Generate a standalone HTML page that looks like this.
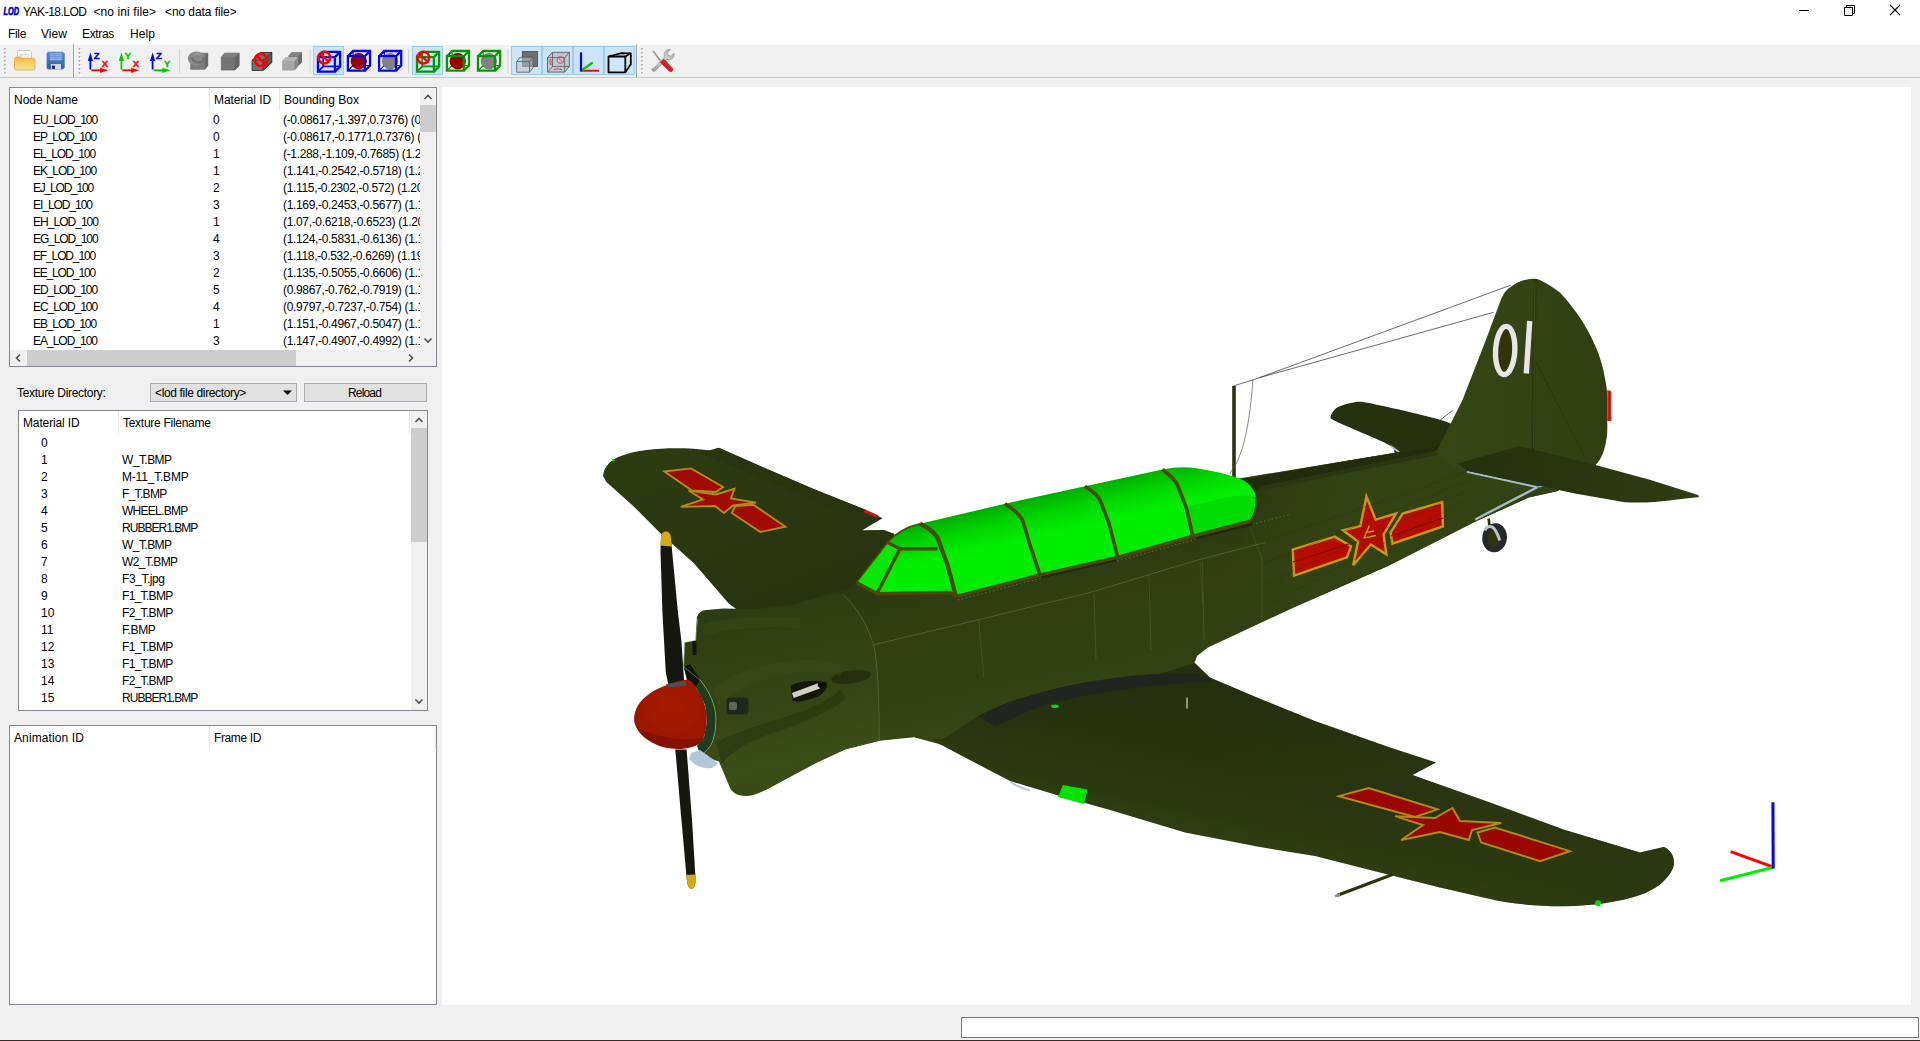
<!DOCTYPE html>
<html><head><meta charset="utf-8"><title>YAK-18.LOD</title>
<style>
*{box-sizing:border-box;margin:0;padding:0}
html,body{width:1920px;height:1041px;overflow:hidden;background:#f0f0f0;font-family:"Liberation Sans",sans-serif;font-size:12px;color:#000}
.abs{position:absolute}
.tx{position:absolute;height:17px;line-height:17px;white-space:pre}
#title{left:0;top:0;width:1920px;height:44px;background:#fff}
#tb{left:0;top:44px;width:1920px;height:34px;background:#f0f0f0;border-top:1px solid #fff;border-bottom:1px solid #c9c9c9}
#vp{left:442px;top:87px;width:1469px;height:918px;background:#fff;overflow:hidden}
</style></head><body>
<div id="title" class="abs"></div>
<div id="tb" class="abs"></div>
<div class="abs" style="left:9px;top:87px;width:428px;height:280px;background:#fff;border:1px solid #828790"></div>
<div class="abs" style="left:209px;top:88px;width:1px;height:22px;background:#e5e5e5;"></div>
<div class="abs" style="left:279px;top:88px;width:1px;height:22px;background:#e5e5e5;"></div>
<div class="abs" style="left:420px;top:88px;width:16px;height:262px;background:#f0f0f0;"></div>
<div class="abs" style="left:420px;top:105px;width:16px;height:27px;background:#cdcdcd;"></div>
<div class="abs" style="left:10px;top:350px;width:426px;height:16px;background:#f0f0f0;"></div>
<div class="abs" style="left:27px;top:350px;width:269px;height:16px;background:#cdcdcd;"></div>
<div class="abs" style="left:150px;top:383px;width:147px;height:19px;background:#e1e1e1;border:1px solid #adadad"></div>
<div class="abs" style="left:304px;top:383px;width:123px;height:19px;background:#e1e1e1;border:1px solid #adadad"></div>
<div class="abs" style="left:18px;top:410px;width:410px;height:301px;background:#fff;border:1px solid #828790"></div>
<div class="abs" style="left:118px;top:411px;width:1px;height:22px;background:#e5e5e5;"></div>
<div class="abs" style="left:409px;top:411px;width:1px;height:22px;background:#e5e5e5;"></div>
<div class="abs" style="left:411px;top:411px;width:16px;height:299px;background:#f0f0f0;"></div>
<div class="abs" style="left:411px;top:428px;width:16px;height:114px;background:#cdcdcd;"></div>
<div class="abs" style="left:9px;top:725px;width:428px;height:280px;background:#fff;border:1px solid #828790"></div>
<div class="abs" style="left:209px;top:726px;width:1px;height:22px;background:#e5e5e5;"></div>
<div class="abs" style="left:435px;top:726px;width:1px;height:22px;background:#e5e5e5;"></div>
<div class="abs" style="left:961px;top:1017px;width:958px;height:21px;background:#fff;border:1px solid #7a7a7a"></div>
<div class="abs" style="left:0px;top:1040px;width:1920px;height:1px;background:#3a2a22;"></div>
<svg class="abs" style="left:0;top:0" width="442" height="1041"><path d="M424.5 99 L428 95.5 L431.5 99 M424.5 338.5 L428 342 L431.5 338.5 M20 354.5 L16.5 358 L20 361.5 M409 354.5 L412.5 358 L409 361.5 M415.5 422 L419 418.5 L422.5 422 M415.5 699.5 L419 703 L422.5 699.5" fill="none" stroke="#505050" stroke-width="1.6"/><path d="M283 390.5h9l-4.5 4.5z" fill="#000"/></svg>
<div class="tx" style="left:23px;top:4px;letter-spacing:-0.498px;">YAK-18.LOD</div>
<div class="tx" style="left:93.5px;top:4px;letter-spacing:0.085px;">&lt;no ini file&gt;</div>
<div class="tx" style="left:165px;top:4px;letter-spacing:-0.081px;">&lt;no data file&gt;</div>
<div class="tx" style="left:8px;top:26px;letter-spacing:-0.336px;">File</div>
<div class="tx" style="left:41px;top:26px;letter-spacing:0.051px;">View</div>
<div class="tx" style="left:82px;top:26px;letter-spacing:-0.336px;">Extras</div>
<div class="tx" style="left:130px;top:26px;letter-spacing:0.078px;">Help</div>
<div class="tx" style="left:14px;top:92px;letter-spacing:-0.003px;">Node Name</div>
<div class="tx" style="left:214px;top:92px;letter-spacing:-0.092px;">Material ID</div>
<div class="tx" style="left:284px;top:92px;letter-spacing:0.022px;">Bounding Box</div>
<div class="tx" style="left:33px;top:112px;letter-spacing:-1.072px;">EU_LOD_100</div>
<div class="tx" style="left:213px;top:112px;">0</div>
<div class="tx" style="left:283px;top:112px;width:137px;overflow:hidden;letter-spacing:-0.33px">(-0.08617,-1.397,0.7376) (0</div>
<div class="tx" style="left:33px;top:129px;letter-spacing:-1.106px;">EP_LOD_100</div>
<div class="tx" style="left:213px;top:129px;">0</div>
<div class="tx" style="left:283px;top:129px;width:137px;overflow:hidden;letter-spacing:-0.33px">(-0.08617,-0.1771,0.7376) (</div>
<div class="tx" style="left:33px;top:146px;letter-spacing:-1.073px;">EL_LOD_100</div>
<div class="tx" style="left:213px;top:146px;">1</div>
<div class="tx" style="left:283px;top:146px;width:137px;overflow:hidden;letter-spacing:-0.33px">(-1.288,-1.109,-0.7685) (1.2</div>
<div class="tx" style="left:33px;top:163px;letter-spacing:-1.106px;">EK_LOD_100</div>
<div class="tx" style="left:213px;top:163px;">1</div>
<div class="tx" style="left:283px;top:163px;width:137px;overflow:hidden;letter-spacing:-0.33px">(1.141,-0.2542,-0.5718) (1.2</div>
<div class="tx" style="left:33px;top:180px;letter-spacing:-1.205px;">EJ_LOD_100</div>
<div class="tx" style="left:213px;top:180px;">2</div>
<div class="tx" style="left:283px;top:180px;width:137px;overflow:hidden;letter-spacing:-0.33px">(1.115,-0.2302,-0.572) (1.20</div>
<div class="tx" style="left:33px;top:197px;letter-spacing:-1.039px;">EI_LOD_100</div>
<div class="tx" style="left:213px;top:197px;">3</div>
<div class="tx" style="left:283px;top:197px;width:137px;overflow:hidden;letter-spacing:-0.33px">(1.169,-0.2453,-0.5677) (1.1</div>
<div class="tx" style="left:33px;top:214px;letter-spacing:-0.972px;">EH_LOD_100</div>
<div class="tx" style="left:213px;top:214px;">1</div>
<div class="tx" style="left:283px;top:214px;width:137px;overflow:hidden;letter-spacing:-0.33px">(1.07,-0.6218,-0.6523) (1.20</div>
<div class="tx" style="left:33px;top:231px;letter-spacing:-1.089px;">EG_LOD_100</div>
<div class="tx" style="left:213px;top:231px;">4</div>
<div class="tx" style="left:283px;top:231px;width:137px;overflow:hidden;letter-spacing:-0.33px">(1.124,-0.5831,-0.6136) (1.1</div>
<div class="tx" style="left:33px;top:248px;letter-spacing:-1.139px;">EF_LOD_100</div>
<div class="tx" style="left:213px;top:248px;">3</div>
<div class="tx" style="left:283px;top:248px;width:137px;overflow:hidden;letter-spacing:-0.33px">(1.118,-0.532,-0.6269) (1.19</div>
<div class="tx" style="left:33px;top:265px;letter-spacing:-1.206px;">EE_LOD_100</div>
<div class="tx" style="left:213px;top:265px;">2</div>
<div class="tx" style="left:283px;top:265px;width:137px;overflow:hidden;letter-spacing:-0.33px">(1.135,-0.5055,-0.6606) (1.1</div>
<div class="tx" style="left:33px;top:282px;letter-spacing:-1.072px;">ED_LOD_100</div>
<div class="tx" style="left:213px;top:282px;">5</div>
<div class="tx" style="left:283px;top:282px;width:137px;overflow:hidden;letter-spacing:-0.33px">(0.9867,-0.762,-0.7919) (1.1</div>
<div class="tx" style="left:33px;top:299px;letter-spacing:-1.072px;">EC_LOD_100</div>
<div class="tx" style="left:213px;top:299px;">4</div>
<div class="tx" style="left:283px;top:299px;width:137px;overflow:hidden;letter-spacing:-0.33px">(0.9797,-0.7237,-0.754) (1.1</div>
<div class="tx" style="left:33px;top:316px;letter-spacing:-1.106px;">EB_LOD_100</div>
<div class="tx" style="left:213px;top:316px;">1</div>
<div class="tx" style="left:283px;top:316px;width:137px;overflow:hidden;letter-spacing:-0.33px">(1.151,-0.4967,-0.5047) (1.1</div>
<div class="tx" style="left:33px;top:333px;letter-spacing:-1.006px;">EA_LOD_100</div>
<div class="tx" style="left:213px;top:333px;">3</div>
<div class="tx" style="left:283px;top:333px;width:137px;overflow:hidden;letter-spacing:-0.33px">(1.147,-0.4907,-0.4992) (1.1</div>
<div class="tx" style="left:17px;top:385px;letter-spacing:-0.302px;">Texture Directory:</div>
<div class="tx" style="left:155px;top:385px;letter-spacing:-0.353px;">&lt;lod file directory&gt;</div>
<div class="tx" style="left:348px;top:385px;letter-spacing:-0.839px;">Reload</div>
<div class="tx" style="left:23px;top:415px;letter-spacing:-0.138px;">Material ID</div>
<div class="tx" style="left:123px;top:415px;letter-spacing:-0.278px;">Texture Filename</div>
<div class="tx" style="left:41px;top:435px;">0</div>
<div class="tx" style="left:41px;top:452px;">1</div>
<div class="tx" style="left:122px;top:452px;letter-spacing:-0.549px;">W_T.BMP</div>
<div class="tx" style="left:41px;top:469px;">2</div>
<div class="tx" style="left:122px;top:469px;letter-spacing:-0.197px;">M-11_T.BMP</div>
<div class="tx" style="left:41px;top:486px;">3</div>
<div class="tx" style="left:122px;top:486px;letter-spacing:-0.692px;">F_T.BMP</div>
<div class="tx" style="left:41px;top:503px;">4</div>
<div class="tx" style="left:122px;top:503px;letter-spacing:-0.724px;">WHEEL.BMP</div>
<div class="tx" style="left:41px;top:520px;">5</div>
<div class="tx" style="left:122px;top:520px;letter-spacing:-0.976px;">RUBBER1.BMP</div>
<div class="tx" style="left:41px;top:537px;">6</div>
<div class="tx" style="left:122px;top:537px;letter-spacing:-0.549px;">W_T.BMP</div>
<div class="tx" style="left:41px;top:554px;">7</div>
<div class="tx" style="left:122px;top:554px;letter-spacing:-0.564px;">W2_T.BMP</div>
<div class="tx" style="left:41px;top:571px;">8</div>
<div class="tx" style="left:122px;top:571px;letter-spacing:-0.429px;">F3_T.jpg</div>
<div class="tx" style="left:41px;top:588px;">9</div>
<div class="tx" style="left:122px;top:588px;letter-spacing:-0.689px;">F1_T.BMP</div>
<div class="tx" style="left:41px;top:605px;">10</div>
<div class="tx" style="left:122px;top:605px;letter-spacing:-0.689px;">F2_T.BMP</div>
<div class="tx" style="left:41px;top:622px;">11</div>
<div class="tx" style="left:122px;top:622px;letter-spacing:-0.389px;">F.BMP</div>
<div class="tx" style="left:41px;top:639px;">12</div>
<div class="tx" style="left:122px;top:639px;letter-spacing:-0.689px;">F1_T.BMP</div>
<div class="tx" style="left:41px;top:656px;">13</div>
<div class="tx" style="left:122px;top:656px;letter-spacing:-0.689px;">F1_T.BMP</div>
<div class="tx" style="left:41px;top:673px;">14</div>
<div class="tx" style="left:122px;top:673px;letter-spacing:-0.689px;">F2_T.BMP</div>
<div class="tx" style="left:41px;top:690px;">15</div>
<div class="tx" style="left:122px;top:690px;letter-spacing:-0.976px;">RUBBER1.BMP</div>
<div class="tx" style="left:14px;top:730px;letter-spacing:0.108px;">Animation ID</div>
<div class="tx" style="left:214px;top:730px;letter-spacing:-0.377px;">Frame ID</div>
<svg class="abs" style="left:0;top:0" width="700" height="80" viewBox="0 0 700 80">
<defs><linearGradient id="gf" x1="0" y1="0" x2="0" y2="1"><stop offset="0" stop-color="#f0b840"/><stop offset="0.5" stop-color="#f7d06a"/><stop offset="1" stop-color="#f3e08c"/></linearGradient><linearGradient id="gs" x1="0" y1="0" x2="0" y2="1"><stop offset="0" stop-color="#5a8fd0"/><stop offset="1" stop-color="#2f5fa8"/></linearGradient><linearGradient id="gw" x1="0" y1="1" x2="1" y2="0"><stop offset="0" stop-color="#9a9a9a"/><stop offset="0.5" stop-color="#d8d8d8"/><stop offset="1" stop-color="#a8a8a8"/></linearGradient></defs>
<text x="3.500" y="14.800" font-size="10.500" font-weight="bold" font-style="italic" fill="#0000e0" stroke="#0000e0" stroke-width="0.700" textLength="15.500" lengthAdjust="spacingAndGlyphs" style="font-family:'Liberation Sans',sans-serif">LOD</text>
<rect x="4.2" y="48" width="1.6" height="1.6" fill="#a8a8a8"/>
<rect x="5.5" y="49.3" width="1" height="1" fill="#fff"/>
<rect x="4.2" y="52" width="1.6" height="1.6" fill="#a8a8a8"/>
<rect x="5.5" y="53.3" width="1" height="1" fill="#fff"/>
<rect x="4.2" y="56" width="1.6" height="1.6" fill="#a8a8a8"/>
<rect x="5.5" y="57.3" width="1" height="1" fill="#fff"/>
<rect x="4.2" y="60" width="1.6" height="1.6" fill="#a8a8a8"/>
<rect x="5.5" y="61.3" width="1" height="1" fill="#fff"/>
<rect x="4.2" y="64" width="1.6" height="1.6" fill="#a8a8a8"/>
<rect x="5.5" y="65.3" width="1" height="1" fill="#fff"/>
<rect x="4.2" y="68" width="1.6" height="1.6" fill="#a8a8a8"/>
<rect x="5.5" y="69.3" width="1" height="1" fill="#fff"/>
<rect x="4.2" y="72" width="1.6" height="1.6" fill="#a8a8a8"/>
<rect x="5.5" y="73.3" width="1" height="1" fill="#fff"/>
<rect x="78.7" y="48" width="1.6" height="1.6" fill="#a8a8a8"/>
<rect x="80" y="49.3" width="1" height="1" fill="#fff"/>
<rect x="78.7" y="52" width="1.6" height="1.6" fill="#a8a8a8"/>
<rect x="80" y="53.3" width="1" height="1" fill="#fff"/>
<rect x="78.7" y="56" width="1.6" height="1.6" fill="#a8a8a8"/>
<rect x="80" y="57.3" width="1" height="1" fill="#fff"/>
<rect x="78.7" y="60" width="1.6" height="1.6" fill="#a8a8a8"/>
<rect x="80" y="61.3" width="1" height="1" fill="#fff"/>
<rect x="78.7" y="64" width="1.6" height="1.6" fill="#a8a8a8"/>
<rect x="80" y="65.3" width="1" height="1" fill="#fff"/>
<rect x="78.7" y="68" width="1.6" height="1.6" fill="#a8a8a8"/>
<rect x="80" y="69.3" width="1" height="1" fill="#fff"/>
<rect x="78.7" y="72" width="1.6" height="1.6" fill="#a8a8a8"/>
<rect x="80" y="73.3" width="1" height="1" fill="#fff"/>
<rect x="641.2" y="48" width="1.6" height="1.6" fill="#a8a8a8"/>
<rect x="642.5" y="49.3" width="1" height="1" fill="#fff"/>
<rect x="641.2" y="52" width="1.6" height="1.6" fill="#a8a8a8"/>
<rect x="642.5" y="53.3" width="1" height="1" fill="#fff"/>
<rect x="641.2" y="56" width="1.6" height="1.6" fill="#a8a8a8"/>
<rect x="642.5" y="57.3" width="1" height="1" fill="#fff"/>
<rect x="641.2" y="60" width="1.6" height="1.6" fill="#a8a8a8"/>
<rect x="642.5" y="61.3" width="1" height="1" fill="#fff"/>
<rect x="641.2" y="64" width="1.6" height="1.6" fill="#a8a8a8"/>
<rect x="642.5" y="65.3" width="1" height="1" fill="#fff"/>
<rect x="641.2" y="68" width="1.6" height="1.6" fill="#a8a8a8"/>
<rect x="642.5" y="69.3" width="1" height="1" fill="#fff"/>
<rect x="641.2" y="72" width="1.6" height="1.6" fill="#a8a8a8"/>
<rect x="642.5" y="73.3" width="1" height="1" fill="#fff"/>
<rect x="73" y="44" width="1" height="34" fill="#a0a0a0"/><rect x="74" y="44" width="1" height="34" fill="#fff"/>
<rect x="636" y="44" width="1" height="34" fill="#a0a0a0"/><rect x="637" y="44" width="1" height="34" fill="#fff"/>
<rect x="179" y="49" width="1" height="24" fill="#d2d2d2"/>
<rect x="309.5" y="49" width="1" height="24" fill="#d2d2d2"/>
<rect x="408" y="49" width="1" height="24" fill="#d2d2d2"/>
<rect x="507.5" y="49" width="1" height="24" fill="#d2d2d2"/>
<rect x="313.5" y="46.5" width="30" height="28" fill="#cce4f7" stroke="#99ccf5" stroke-width="1"/>
<rect x="412.5" y="46.5" width="30" height="28" fill="#cce4f7" stroke="#99ccf5" stroke-width="1"/>
<rect x="511.5" y="46.5" width="30" height="28" fill="#cce4f7" stroke="#99ccf5" stroke-width="1"/>
<rect x="542.5" y="46.5" width="30" height="28" fill="#cce4f7" stroke="#99ccf5" stroke-width="1"/>
<rect x="573.5" y="46.5" width="30" height="28" fill="#cce4f7" stroke="#99ccf5" stroke-width="1"/>
<rect x="604.5" y="46.5" width="30" height="28" fill="#cce4f7" stroke="#99ccf5" stroke-width="1"/>
<path d="M17.5 50.5h12l2 2v6h-14z" fill="#fafafa" stroke="#c4c4c4" stroke-width="0.8"/>
<path d="M19.5 54.5h9.5M19.5 56h9.5" stroke="#d0d0d0" stroke-width="0.7"/>
<path d="M14.5 59q0-2 2-2h4l1.2 1.2h11.3q2 0 2 2v8q0 1.8-2 1.8h-16.5q-2 0-2-1.8z" fill="url(#gf)" stroke="#e0a848" stroke-width="0.8"/>
<path d="M48.5 52.3h14.5l1.3 1.3v14l-1.5 1.5h-14.3q-1.5 0-1.5-1.5v-13.8q0-1.5 1.500-1.5z" fill="url(#gs)" stroke="#3d6cb0" stroke-width="0.7"/>
<rect x="50" y="53" width="11.8" height="7.2" fill="#8fb4e6"/>
<path d="M50 54.6h11.8M50 56.4h11.800M50 58.200h11.800" stroke="#5f8ed0" stroke-width="0.8"/>
<rect x="51" y="64" width="10" height="5.2" fill="#d9d9d9"/><rect x="52" y="65.600" width="3" height="3.300" fill="#1c2c5c"/>
<path d="M90.4 69.5V58" stroke="#0000ff" stroke-width="1.8" fill="none"/>
<path d="M90.4 52.6l2.6 8.4h-5.2z" fill="#0000ff"/>
<path d="M91.3 70.300H101.4" stroke="#ff0000" stroke-width="1.8" fill="none"/>
<path d="M108 70.300l-7.8 -2.600v5.2z" fill="#ff0000"/>
<text x="93.8" y="59.200" font-size="9.500" font-weight="bold" fill="#0000ff" stroke="#0000ff" stroke-width="0.400" style="font-family:'Liberation Sans',sans-serif">Z</text>
<text x="101.8" y="67.200" font-size="9.500" font-weight="bold" fill="#ff0000" stroke="#ff0000" stroke-width="0.400" style="font-family:'Liberation Sans',sans-serif">X</text>
<path d="M121.4 69.5V58" stroke="#00cc00" stroke-width="1.8" fill="none"/>
<path d="M121.4 52.6l2.6 8.4h-5.2z" fill="#00cc00"/>
<path d="M122.3 70.300H132.4" stroke="#ff0000" stroke-width="1.8" fill="none"/>
<path d="M139 70.300l-7.8 -2.600v5.2z" fill="#ff0000"/>
<text x="124.8" y="59.200" font-size="9.500" font-weight="bold" fill="#00cc00" stroke="#00cc00" stroke-width="0.400" style="font-family:'Liberation Sans',sans-serif">Y</text>
<text x="132.8" y="67.200" font-size="9.500" font-weight="bold" fill="#ff0000" stroke="#ff0000" stroke-width="0.400" style="font-family:'Liberation Sans',sans-serif">X</text>
<path d="M152.6 69.5V58" stroke="#0000ff" stroke-width="1.8" fill="none"/>
<path d="M152.6 52.6l2.6 8.4h-5.2z" fill="#0000ff"/>
<path d="M153.5 70.300H163.6" stroke="#00cc00" stroke-width="1.8" fill="none"/>
<path d="M170.2 70.300l-7.8 -2.600v5.2z" fill="#00cc00"/>
<text x="156" y="59.200" font-size="9.500" font-weight="bold" fill="#0000ff" stroke="#0000ff" stroke-width="0.400" style="font-family:'Liberation Sans',sans-serif">Z</text>
<text x="164" y="67.200" font-size="9.500" font-weight="bold" fill="#00cc00" stroke="#00cc00" stroke-width="0.400" style="font-family:'Liberation Sans',sans-serif">Y</text>
<path d="M190.200 56.900l3.400-4.100h14.500v12.800l-3.400 4.100h-14.500z" fill="#7c7c7c"/>
<path d="M204.700 56.900l3.400-4.100v12.800l-3.400 4.100z" fill="#6a6a6a"/>
<ellipse cx="196.400" cy="58.600" rx="8.600" ry="7.100" fill="#8a8a8a"/>
<path d="M191.500 57.500q2.500 5.500 9 5q3.500-1 3-5.500" stroke="#707070" stroke-width="2.400" fill="none"/>
<path d="M194 55q3-2.500 7-1" stroke="#9a9a9a" stroke-width="1.600" fill="none"/>
<path d="M221.300 57.200l3.400-4.100h14.500v12.600l-4.400 4.400h-13.500z" fill="#737373" stroke="#5e5e5e" stroke-width="0.600"/>
<path d="M221.300 57.200l3.400-4.100h14.500l-4.400 4.100z" fill="#7e7e7e"/>
<path d="M234.800 57.200l4.400-4.100v12.600l-4.400 4.400z" fill="#636363"/>
<path d="M252.100 60.200l8.100-7.700h11.500v10.100l-8.800 7.800h-10.800z" fill="#707478" stroke="#2e2e2e" stroke-width="0.900" stroke-linejoin="round"/>
<path d="M262.900 60.200l8.800-8.100v10.500l-8.800 7.800z" fill="#555555" stroke="#2e2e2e" stroke-width="0.700"/>
<path d="M252.100 60.200h10.800" stroke="#2e2e2e" stroke-width="0.700"/>
<circle cx="260.9" cy="59.9" r="6.1" fill="none" stroke="#ff0000" stroke-width="2.600"/>
<path d="M256.63 55.63L265.17 64.17" stroke="#ff0000" stroke-width="2.400"/>
<path d="M288.300 56l3.700-3.900h9.900v10.100l-3.700 3.500h-9.900z" fill="#7a7a7a"/>
<path d="M298.200 56l3.700-3.900v10.100l-3.700 3.500z" fill="#6a6a6a"/>
<path d="M288.300 56l3.700-3.900h9.900l-3.700 3.900z" fill="#868686"/>
<path d="M282.200 60.900l3.400-3.700h12.200v9.500l-3.400 3.700h-12.200z" fill="#a6a6a6"/>
<path d="M294.400 60.900l3.400-3.700v9.500l-3.400 3.700z" fill="#8a8a8a"/>
<path d="M282.200 60.900l3.400-3.700h12.200l-3.400 3.700z" fill="#b6b6b6"/>
<path d="M323.2 51.9V66.4H340.1 M318 71.6L323.2 66.4" fill="none" stroke="#0000ff" stroke-width="1.7"/>
<path d="M318 57.1H334.9V71.6H318Z M318 57.1L323.2 51.9H340.1V66.4L334.9 71.6 M334.9 57.1L340.1 51.9" fill="none" stroke="#0000ff" stroke-width="2.3" stroke-linejoin="miter"/>
<circle cx="324.3" cy="57.6" r="5.9" fill="none" stroke="#ff0000" stroke-width="2.600"/>
<path d="M320.17 53.47L328.43 61.73" stroke="#ff0000" stroke-width="2.400"/>
<path d="M353.1 51V65.5H370 M347.9 70.7L353.1 65.5" fill="none" stroke="#0000ff" stroke-width="1.1"/>
<circle cx="358.8" cy="61.2" r="8.2" fill="#9c0000"/>
<path d="M347.9 56.2H364.8V70.7H347.9Z M347.9 56.2L353.1 51H370V65.5L364.8 70.7 M364.8 56.2L370 51" fill="none" stroke="#0000ff" stroke-width="2.3" stroke-linejoin="miter"/>
<path d="M384.3 51V65.5H401.2 M379.1 70.7L384.3 65.5" fill="none" stroke="#0000ff" stroke-width="1.1"/>
<circle cx="390" cy="61.2" r="8.2" fill="#828282"/>
<path d="M379.1 56.2H396V70.7H379.1Z M379.1 56.2L384.3 51H401.2V65.5L396 70.7 M396 56.2L401.2 51" fill="none" stroke="#0000ff" stroke-width="2.3" stroke-linejoin="miter"/>
<path d="M422.2 51.9V66.4H439.1 M417 71.6L422.2 66.4" fill="none" stroke="#009900" stroke-width="1.7"/>
<path d="M417 57.1H433.9V71.6H417Z M417 57.1L422.2 51.9H439.1V66.4L433.9 71.6 M433.9 57.1L439.1 51.9" fill="none" stroke="#009900" stroke-width="2.3" stroke-linejoin="miter"/>
<circle cx="423.3" cy="57.6" r="5.9" fill="none" stroke="#ff0000" stroke-width="2.600"/>
<path d="M419.17 53.47L427.43 61.73" stroke="#ff0000" stroke-width="2.400"/>
<path d="M452.1 51V65.5H469 M446.9 70.7L452.1 65.5" fill="none" stroke="#009900" stroke-width="1.1"/>
<circle cx="457.8" cy="61.2" r="8.2" fill="#9c0000"/>
<path d="M446.9 56.2H463.8V70.7H446.9Z M446.9 56.2L452.1 51H469V65.5L463.8 70.7 M463.8 56.2L469 51" fill="none" stroke="#009900" stroke-width="2.3" stroke-linejoin="miter"/>
<path d="M483.2 51V65.5H500.1 M478 70.7L483.2 65.5" fill="none" stroke="#009900" stroke-width="1.1"/>
<circle cx="488.9" cy="61.2" r="8.2" fill="#828282"/>
<path d="M478 56.2H494.9V70.7H478Z M478 56.2L483.2 51H500.1V65.5L494.9 70.7 M494.9 56.2L500.1 51" fill="none" stroke="#009900" stroke-width="2.3" stroke-linejoin="miter"/>
<rect x="522.500" y="51.500" width="15" height="15" fill="#6e6e6e" stroke="#4a4a4a" stroke-width="0.800"/>
<path d="M516.700 61.500l3.500-4.300h12.800v10.800l-3.500 4.200h-12.800z" fill="#b8c4cc" fill-opacity="0.550" stroke="#5a5a5a" stroke-width="0.800"/>
<path d="M516.700 61.500h12.800v10.700M529.500 61.500l3.500-4.300" fill="none" stroke="#5a5a5a" stroke-width="0.800"/>
<path d="M547.500 57.600l5-5.300h16.800v14.200l-4.600 5.600h-17.200z" fill="#b4bcc4" fill-opacity="0.700" stroke="#5c5c5c" stroke-width="0.900"/>
<path d="M547.500 57.600h17.200v14.500M564.700 57.600l4.600-5.300M552.500 52.300v14.200h16.800M552.500 66.500l-5 5.600" fill="none" stroke="#5c5c5c" stroke-width="0.800"/>
<circle cx="560.500" cy="60" r="3.500" fill="none" stroke="#d04848" stroke-width="0.900"/><path d="M558 57.500l5 5" stroke="#d04848" stroke-width="0.900"/>
<path d="M550.500 59q-1.500 3 0 5t0 0q1.500-2 0-5M554 69.500q3-1.500 8 0" fill="none" stroke="#d04848" stroke-width="0.900"/>
<path d="M581 70.700H599" stroke="#ff0000" stroke-width="2"/><path d="M581 70.700L592.800 62.500" stroke="#00cc00" stroke-width="2.200"/><path d="M581 71.600V52.400" stroke="#0000ff" stroke-width="2.200"/>
<path d="M608.500 56.500l13-3.400 9.300 0.200v11l-5.500 8h-16.800z" fill="#cfe6f8" stroke="#000" stroke-width="1.800" stroke-linejoin="round"/>
<path d="M608.500 56.500h16.800v15.800M625.300 56.500l5.500-3.200" fill="none" stroke="#000" stroke-width="1.800"/>
<path d="M653.500 51.500l7.500 10" stroke="#9c9c9c" stroke-width="1.800" stroke-linecap="round"/>
<path d="M653.500 68.500l11-11.500q-1.500-4 1.500-6.500q2-1.500 4.500-1l-3 3.200l0.800 2.700l2.700 0.800l3-3q0.800 3-1.500 5.200q-2.500 2.200-6 1l-11 11.300q-2 1.600-3.300-0.300q-1-1.200 0.300-2z" fill="url(#gw)" stroke="#8a8a8a" stroke-width="0.600"/>
<path d="M660.300 62.300l3.600-3.200l8.800 9.300q1 1.600-0.800 3q-1.600 1-2.800-0.300z" fill="#d42020" stroke="#a01010" stroke-width="0.500"/>
<path d="M1799 10.500h10" stroke="#000" stroke-width="1"/>
</svg>
<svg class="abs" style="left:1780px;top:0" width="140" height="22" viewBox="1780 0 140 22"><path d="M1799 10.500h10" stroke="#000" stroke-width="1" fill="none"/><path d="M1844.500 7.500h8v8h-8zM1846.500 7.500v-2h8v8h-2" stroke="#000" stroke-width="1" fill="none"/><path d="M1890 5l10 10M1900 5l-10 10" stroke="#000" stroke-width="1.100" fill="none"/></svg>
<div id="vp" class="abs"><svg class="abs" style="left:0;top:0" width="1469" height="918" viewBox="442 87 1469 918">
<defs><linearGradient id="gLW" gradientUnits="userSpaceOnUse" x1="690" y1="445" x2="750" y2="600"><stop offset="0" stop-color="#2d3b11"/><stop offset="0.45" stop-color="#2b3810"/><stop offset="1" stop-color="#28340f"/></linearGradient><linearGradient id="gNW" gradientUnits="userSpaceOnUse" x1="1300" y1="712" x2="1268" y2="856"><stop offset="0" stop-color="#25300e"/><stop offset="0.45" stop-color="#27330f"/><stop offset="0.8" stop-color="#2c3910"/><stop offset="1" stop-color="#303f12"/></linearGradient><linearGradient id="gNW2" gradientUnits="userSpaceOnUse" x1="1200" y1="760" x2="1660" y2="870"><stop offset="0" stop-color="#2d3b11" stop-opacity="0"/><stop offset="0.5" stop-color="#2d3b11" stop-opacity="0.35"/><stop offset="1" stop-color="#2d3b11" stop-opacity="0.55"/></linearGradient><linearGradient id="gFU" gradientUnits="userSpaceOnUse" x1="1000" y1="560" x2="1036" y2="740"><stop offset="0" stop-color="#2c3910"/><stop offset="0.25" stop-color="#303e12"/><stop offset="0.6" stop-color="#314012"/><stop offset="0.85" stop-color="#354514"/><stop offset="1" stop-color="#364714"/></linearGradient><linearGradient id="gFR2" gradientUnits="userSpaceOnUse" x1="1225" y1="560" x2="1330" y2="575"><stop offset="0" stop-color="#334213" stop-opacity="0"/><stop offset="1" stop-color="#334213" stop-opacity="1"/></linearGradient><linearGradient id="gCW" gradientUnits="userSpaceOnUse" x1="760" y1="600" x2="800" y2="800"><stop offset="0" stop-color="#2d3b11"/><stop offset="0.3" stop-color="#334213"/><stop offset="0.55" stop-color="#354514"/><stop offset="0.8" stop-color="#3c4e17"/><stop offset="1" stop-color="#384915"/></linearGradient><linearGradient id="gFIN" gradientUnits="userSpaceOnUse" x1="1450" y1="360" x2="1610" y2="362"><stop offset="0" stop-color="#354514"/><stop offset="0.51" stop-color="#334313"/><stop offset="0.525" stop-color="#26310e"/><stop offset="0.54" stop-color="#334213"/><stop offset="1" stop-color="#303f12"/></linearGradient><linearGradient id="gST" gradientUnits="userSpaceOnUse" x1="1480" y1="460" x2="1690" y2="500"><stop offset="0" stop-color="#26310e"/><stop offset="0.5" stop-color="#2a3610"/><stop offset="1" stop-color="#2f3d12"/></linearGradient><linearGradient id="gCN" gradientUnits="userSpaceOnUse" x1="1050" y1="484" x2="1070" y2="572"><stop offset="0" stop-color="#00a000"/><stop offset="0.12" stop-color="#00b000"/><stop offset="0.3" stop-color="#00d400"/><stop offset="0.55" stop-color="#00f000"/><stop offset="1" stop-color="#00ec00"/></linearGradient><radialGradient id="gSP" gradientUnits="userSpaceOnUse" cx="672" cy="705" r="50"><stop offset="0" stop-color="#a81c00"/><stop offset="1" stop-color="#961400"/></radialGradient></defs>
<path d="M1331 415.5C1331.2 413.9 1334.5 409 1337 407.5C1339.5 406 1348.3 403.2 1352 402.7C1355.7 402.2 1357.3 400.6 1369 403.1C1380.7 405.6 1442.5 418.6 1452 424.3C1461.5 430 1456.2 448.3 1450 452C1443.8 455.7 1406 456.8 1399 456C1392 455.2 1397.4 449.5 1390 445.4C1382.6 441.3 1342.2 424.6 1335.3 421.1C1328.4 417.6 1330.8 417.1 1331 415.5Z" fill="#26310e" />
<polyline points="1390.5,446 1399,452" fill="none" stroke="#aebfd0" stroke-width="2" />
<polyline points="1234,386 1234,478" fill="none" stroke="#2a340a" stroke-width="3.6" />
<polyline points="1233.8,385.8 1252.8,379.9 1259,377.8 1510.7,285.2" fill="none" stroke="#444" stroke-width="0.8" />
<polyline points="1259,377.8 1493.7,312.3" fill="none" stroke="#444" stroke-width="0.8" />
<path d="M1252.8 379.9C1251 410 1246 445 1236 464L1229.6 474" fill="none" stroke="#555" stroke-width="0.7"/>
<polyline points="1452.5,410.5 1438.8,421.1" fill="none" stroke="#444" stroke-width="0.8" />
<path d="M603 475.8C604 466 612 459 621 456C640 449 665 447.5 693.7 448.7L711 450.4L718.8 447.8L762.9 467.2L814.8 489.6L864.9 509.5L882.2 518.2L862.3 530.3L883.9 529.9L894.3 533.7L900 600L740 612L728.3 602.9L693.7 563.1L660.9 533.7L633.2 506L606.4 481.9Z" fill="url(#gLW)"/>
<polygon points="718.8,447.8 762.9,467.2 814.8,489.6 864.9,509.5 882.2,518.2 872,524 700,453" fill="#29350f" />
<polygon points="664.3,471.5 691.1,468.4 723.1,487 716,492 692,490.5" fill="#a00a00" stroke="#b08c18" stroke-width="1.9"/>
<polygon points="735.2,506 753.4,504.7 785.4,526.8 760.3,532 731.8,513" fill="#a00a00" stroke="#b08c18" stroke-width="1.9"/>
<polygon points="734.4,488.8 731,498.5 756,502.6 733,505.5 724,513 715,506 680.8,506.9 703,499.5 688.5,490.5 716,494.5" fill="#a00a00" stroke="#b08c18" stroke-width="1.9"/>
<polygon points="865,509.5 878.7,515.6 877,518 863.5,512" fill="#c01818" />
<circle cx="613.3" cy="460.3" r="1.3" fill="#00e000"/>
<polygon points="758,609 793,605 827.5,594.6 851.7,587.7 856.3,582.5 950,560 1100,520 1240.5,478.2 1349,460.5 1433,446.5 1441.5,441 1470,440 1540,470 1560,489 1557.9,491 1528.7,497.5 1475.5,521.5 1388,566 1292.5,608 1208,647.5 1197,656 1194,664.4 1215,682 1100,760 940,744.2 914,737.3 879.3,740.7 844.8,749.4 815.4,763.2 792.9,775.3 767,789.2 744.5,796 730,700" fill="url(#gFU)" />
<polygon points="1240.5,478.2 1349,460.5 1433,446.5 1441.5,441 1470,440 1540,470 1560,489 1557.9,491 1528.7,497.5 1475.5,521.5 1388,566 1292.5,608 1208,647.5 1197,656 1250,520" fill="url(#gFR2)" />
<polygon points="1243.6,479.2 1349,460.5 1433,446.5 1441.5,441 1446,449 1349,468.5 1262,486 1256,492" fill="#232d0d" />
<polygon points="1256,492 1262,486 1349,468.5 1446,449 1448,453 1349,472.5 1264,490 1256,499" fill="#2a3710" />
<polygon points="1292.7,549.7 1334.6,536.6 1351,546.3 1346.9,557.3 1294.1,575.6" fill="#b40c00" stroke="#c89a14" stroke-width="2.4" stroke-linejoin="miter"/>
<polygon points="1390.5,532.6 1402.6,513.6 1442.2,502 1442.9,526.3 1392.5,543.6" fill="#b40c00" stroke="#c89a14" stroke-width="2.4"/>
<polygon points="1366.4,496.5 1375.6,519.6 1396,513.5 1383.6,534.5 1386.3,554.3 1370.8,544.5 1353.2,565.2 1358,541.6 1343,530.3 1360.4,526" fill="#b40c00" stroke="#c89a14" stroke-width="2.4"/>
<path d="M1369.5 525.5L1364 538L1376 535.5M1366 532.5L1374 531" fill="none" stroke="#c89a14" stroke-width="1.4"/>
<polyline points="1293,562 1349,544" fill="none" stroke="#8c0800" stroke-width="1.2" />
<polyline points="1391,536 1443,518" fill="none" stroke="#8c0800" stroke-width="1.2" />
<path d="M872.5 645L977.5 620L1090 592.5L1197.5 560L1265 542.5" fill="none" stroke="#9aa87c" stroke-width="0.8" opacity="0.38"/>
<path d="M978.75 620L983.75 677.5M1200 562.5L1203 606M1149 575.5L1151 650M1094 593L1096 660" fill="none" stroke="#9aa87c" stroke-width="0.7" opacity="0.24"/>
<path d="M958 600L1040 578.5L1117.5 561L1192.5 540L1252 524.5L1291 514" fill="none" stroke="#c8d0b8" stroke-width="0.9" stroke-dasharray="1.5 2.5" opacity="0.35"/>
<path d="M1202.5 562L1204 640M1250 527L1262 560L1262 620" fill="none" stroke="#9aa87c" stroke-width="0.7" opacity="0.24"/>
<path d="M1262 542L1470 471" fill="none" stroke="#26300c" stroke-width="0.8" opacity="0.3"/>
<path d="M1262 564L1470 480" fill="none" stroke="#26300c" stroke-width="0.8" opacity="0.3"/>
<path d="M1262 586L1470 489" fill="none" stroke="#26300c" stroke-width="0.8" opacity="0.3"/>
<path d="M1262 608L1470 498" fill="none" stroke="#26300c" stroke-width="0.8" opacity="0.3"/>
<path d="M1441.2 442C1450 425 1456 413 1462.5 399.9L1484.9 342.4L1499.9 302.5C1503 294 1506 290 1509.9 287.5C1517 282 1525 279 1532.4 278.7C1536 278.7 1538 279 1539.9 280C1548 284 1554 288 1559.9 292.5C1568 301 1574 309 1579.9 317.5C1586 327 1591 336 1594.9 344.9C1600 356 1603 367 1604.8 377.4C1607 388 1607.3 394 1607.3 399.9L1607.3 429.9C1607 440 1605 448 1602.3 454.8L1599.8 459.8L1592 470L1519.9 458L1457.5 470L1436 452Z" fill="url(#gFIN)"/>
<polyline points="1534.9,359.9 1584.9,457.3" fill="none" stroke="#2a360a" stroke-width="0.9" />
<polyline points="1534.9,281 1533.6,447.4" fill="none" stroke="#46541a" stroke-width="0.8" />
<polygon points="1607.3,389.9 1611,391 1611,421.1 1607.3,421.1" fill="#e01010" />
<ellipse cx="1505.2" cy="350.5" rx="9.6" ry="24.2" fill="#33330a" stroke="#e6e6e6" stroke-width="5.4" transform="rotate(3 1505.2 350.5)"/>
<path d="M1529.7 321L1526.3 373.5" stroke="#e6e6e6" stroke-width="5.4" fill="none"/>
<polyline points="1466.9,471.7 1537.2,487.2" fill="none" stroke="#a8b8c8" stroke-width="2" />
<polyline points="1475.3,519.5 1537.2,487.2" fill="none" stroke="#a8b8c8" stroke-width="2.4" />
<polyline points="1537.2,487.2 1556,484" fill="none" stroke="#a8b8c8" stroke-width="1.2" />
<polyline points="1488.7,518.5 1489.5,527" fill="none" stroke="#2a340c" stroke-width="2.6" />
<ellipse cx="1494.6" cy="537.7" rx="12.3" ry="14.6" fill="#26282a" transform="rotate(8 1494.6 537.7)"/>
<ellipse cx="1493.8" cy="538.5" rx="6.5" ry="8.5" fill="#30340f" transform="rotate(8 1493.8 538.5)"/>
<path d="M1485 530.5C1486 526.5 1490 525.5 1493 527.5C1496 530 1498 535 1499.8 540.5" fill="none" stroke="#b4c2cc" stroke-width="3"/>
<path d="M1457.5 463.6L1519.9 446.1L1589.9 463.6L1649.8 479.8L1697.3 494.8C1700 496 1699 497.5 1697.3 497.3L1674.8 499.8C1655 502.5 1640 503 1624.8 502.3L1574.9 493.6L1539.9 486.1L1467.4 471.1Z" fill="url(#gST)"/>
<path d="M932 740L965 757.5L1010 781L1060 796L1110 810L1185 832.5L1260 847L1315 856L1390 875L1440 887.5L1490 899C1510 904 1540 906.5 1565 906.2C1590 906 1620 902 1640 895C1655 890 1668 880 1673 868C1676 860 1672 850 1663.75 847L1640 852.5L1565 830L1490 802.5L1412.5 775L1436 762.5L1390 747.5L1315 721L1260 698.75L1210 677.5L1195 663L1160 673.75L1110 678.75L1060 687.5L1010 701.25L977.5 716.25L945 738Z" fill="url(#gNW)"/>
<path d="M932 740L965 757.5L1010 781L1060 796L1110 810L1185 832.5L1260 847L1315 856L1390 875L1440 887.5L1490 899C1510 904 1540 906.5 1565 906.2C1590 906 1620 902 1640 895C1655 890 1668 880 1673 868C1676 860 1672 850 1663.75 847L1640 852.5L1565 830L1490 802.5L1412.5 775L1436 762.5L1390 747.5L1315 721L1260 698.75L1210 677.5L1195 663L1160 673.75L1110 678.75L1060 687.5L1010 701.25L977.5 716.25L945 738Z" fill="url(#gNW2)"/>
<path d="M977.5 716.25C1000 704 1030 695 1060 687.5C1095 680 1130 675 1160 673.75L1197.5 673.25L1215 681.5L1160 685C1120 689 1090 694 1060 701.25C1035 708 1015 716 996.25 726.25Z" fill="#222620"/>
<polygon points="1063,785 1087.5,789.5 1084,804 1058,797" fill="#00e400" />
<ellipse cx="1055" cy="706.2" rx="3.8" ry="1.8" fill="#00e000"/>
<polyline points="1187,697.5 1187,708.5" fill="none" stroke="#e8d0d0" stroke-width="1.2" />
<circle cx="1598" cy="903.2" r="3" fill="#00e000"/>
<polyline points="1392.5,874.5 1337,895.5" fill="none" stroke="#29350f" stroke-width="3" />
<polyline points="1340,894.5 1335,896.3" fill="none" stroke="#8890a0" stroke-width="2.4" />
<polygon points="1338.8,796.2 1368.8,788 1437.5,809.3 1415,817" fill="#980800" stroke="#b08c14" stroke-width="1.9"/>
<polygon points="1477.5,832.5 1495,827.5 1570,851.2 1540,861.2 1481.2,842.5" fill="#980800" stroke="#b08c14" stroke-width="1.9"/>
<polygon points="1452.5,808 1460,821 1501.2,823 1472,830 1468.8,840 1440,832 1401.2,840 1423,825 1395,816.2 1435,818" fill="#980800" stroke="#b08c14" stroke-width="1.9"/>
<path d="M697 617C699 612 702 610.5 706.4 610.1L723.7 608.4L758.3 609.3L793 605L827.5 594.6L843 594.6C855 605 868 625 874 646.4C878 665 879 700 879.3 740.7L844.8 749.4L815.4 763.2L792.9 775.3L767 789.2C758 794 750 796.5 744.5 796C738 795.5 733 793 730.6 789.2L718.9 761.4L700.7 755.4C708 750 712 745 713.5 738C716 730 716.5 720 715 710C713 700 708 690 700.7 680.7L683.6 666.6L684.6 642.4L695.7 640.4L696 629Z" fill="url(#gCW)"/>
<path d="M683.6 666.6L700.7 680.7C708 690 713 700 715 710C716.5 720 716 730 713.5 738C712 745 708 750 700.7 755.4L697 746L704 737L707 721L705 705L697 689L687 680Z" fill="#1e3c1e"/>
<path d="M684 667L690 664L700 679L696 686L687 679.5Z" fill="#10140c"/>
<path d="M697.5 619L695.7 640.4L684.6 642.4L683.6 666.6L700.7 680.7C708 690 713 700 715 710C716.5 720 716 730 713.5 738C712 745 708 750 700.7 755.4" fill="none" stroke="#9aa880" stroke-width="0.9" opacity="0.7"/>
<path d="M691 753L700 750L718.5 763.2L712 768C702 769 694 765 689 759Z" fill="#b4c6d8"/>
<path d="M1010 781.5C1016 786 1024 789 1030 790.5" stroke="#b4c6d8" stroke-width="1.8" fill="none"/>
<path d="M843 594.6C855 605 868 625 874 646.4C878 665 879 700 879.3 740" fill="none" stroke="#6a7840" stroke-width="0.8" opacity="0.7"/>
<ellipse cx="851" cy="677" rx="20" ry="6.5" fill="#232c0c" opacity="0.8" transform="rotate(-8 851 677)"/>
<path d="M790.5 686C796 681.5 815 679.5 826 682C829 685 826 692 818 696.5C808 700.5 797 702.5 792.5 701Z" fill="#14160a"/>
<path d="M792.8 695.5L819 685.8" stroke="#d4d0c0" stroke-width="5.5"/><ellipse cx="821.5" cy="685.3" rx="3.8" ry="2.4" fill="#08080a"/>
<path d="M716 742C740 730 770 722 800 712C815 707 828 700 840 690L846 698C830 712 800 724 770 734C748 742 730 752 722 764Z" fill="#27330f" opacity="0.55"/>
<path d="M712 690C730 672 770 662 800 660C820 659 835 662 845 668L840 676C825 670 800 670 775 676C750 683 730 694 720 706Z" fill="#3b4c16" opacity="0.45"/>
<path d="M700 625C720 618 760 616 800 618L800 628C765 626 730 628 704 636Z" fill="#3c4e17" opacity="0.4"/>
<rect x="726.5" y="697.5" width="22" height="17" rx="4" fill="#20281c"/><rect x="729" y="702" width="8" height="8" rx="2" fill="#586858"/>
<path d="M694.5 641L694.5 655" stroke="#14180a" stroke-width="4" />
<path d="M856.3 582.5L887.5 542.5C895 534 905 527 920 523.75L1005 503.75L1085 486.25L1162.5 469.5C1175 467 1185 466.5 1195 468C1215 471 1230 475 1240 478.75C1248 482 1254 488 1256 497C1257 508 1254 516 1250 521.25L1192.5 536.25L1117.5 557.5L1040 575L957.5 596.25L950 592.5L877.5 593.75Z" fill="url(#gCN)"/>
<polygon points="887.5,542.5 900,548.8 877.5,592.5 856.3,582.5" fill="#08e808" />
<path d="M1186 507C1215 500 1240 492 1256 497C1257 508 1254 516 1250 521.25L1192.5 536.25Z" fill="#00dc00"/>
<path d="M920 523.75C930 528 935 534 937.5 537.5L947.5 565L956.25 597.5" fill="none" stroke="#4a4a06" stroke-width="4.2"/>
<path d="M887.5 542.5L900 548.75L937.5 548.75M900 548.75L877.5 592.5" fill="none" stroke="#4a4a06" stroke-width="3.4"/>
<path d="M1005 503.75C1015 510 1020 515 1022.5 520L1030 545L1040 575" fill="none" stroke="#4a4a06" stroke-width="3.6"/>
<path d="M1085 486.25C1094 492 1098 496 1100 500L1108.75 522.5L1117.5 556.25" fill="none" stroke="#4a4a06" stroke-width="3.6"/>
<path d="M1162.5 469.5C1171 476 1175 480 1177.5 485L1186.25 507.5L1192.5 535" fill="none" stroke="#4a4a06" stroke-width="3.6"/>
<path d="M856.3 582.5L877.5 593.75L950 592.5L957.5 596.25L1040 575L1117.5 557.5L1192.5 536.25L1250 521.25" fill="none" stroke="#4a4a06" stroke-width="3.4"/>
<path d="M856.3 582.5L887.5 542.5C895 534 905 527 920 523.75" fill="none" stroke="#4a4a06" stroke-width="1.6"/>
<path d="M1250 521.25C1254 516 1257 508 1256 497" fill="none" stroke="#4a4a06" stroke-width="1.8"/>
<polyline points="1042,577.5 1116,560.5" fill="none" stroke="#1e2a10" stroke-width="2.2" />
<polyline points="1196,538.5 1253,524" fill="none" stroke="#1e2a10" stroke-width="2.2" />
<path d="M660.9 540C660.5 534 663 531.5 666 531.5C669 531.5 670.8 534 671 538L672.1 551L677.9 612L681.4 641L684 679.3L684.8 684.5L668.4 684.5L665.8 672.4L662.4 612L660.5 551Z" fill="#16180f"/>
<path d="M660.9 540C660.5 534 663 531.5 666 531.5C669 531.5 670.8 534 671 538L671.7 546.5L660.6 545.5Z" fill="#d4ac10"/>
<path d="M675.3 749.4L686.6 749.4L692 820L695.5 878C695.8 885 694 888.6 691.5 888.6C689 888.6 687.5 886 686.8 880L681 815Z" fill="#16180f"/>
<path d="M686.3 875L695.3 874.5L695.5 878C695.8 885 694 888.6 691.5 888.6C689 888.6 687.5 886 686.8 880Z" fill="#d4ac10"/>
<path d="M634.1 717C634.5 713.3 635.9 708.6 638.2 704.9C640.6 701.2 644.2 697.8 648.2 694.8C652.2 691.8 656 689.3 662.4 686.8C668.8 684.3 680.9 679.4 686.6 679.7C692.3 680 693.7 684.6 696.7 688.8C699.7 693 703 699.5 704.7 704.9C706.4 710.3 707 715.7 706.8 721.1C706.6 726.5 705.4 733.2 703.7 737.2C702 741.2 700.6 743.3 696.7 745.3C692.8 747.2 686.5 748.7 680.5 748.9C674.5 749.1 666.4 748.2 660.4 746.3C654.4 744.3 648.2 740.4 644.2 737.2C640.2 734 637.8 730.5 636.1 727.1C634.4 723.7 633.8 720.7 634.1 717Z" fill="url(#gSP)" />
<path d="M636.1 727.1L644.2 737.2L660.4 746.3L680.5 748.9L696.7 745.3L703.7 737.2C690 741 660 740 636.1 727.1Z" fill="#7e1000" opacity="0.7"/>
<path d="M666 684L686 681L686.5 685.5L668 687.5Z" fill="#4a5054"/>
<polyline points="1773.5,867.2 1730.7,851.6" fill="none" stroke="#ff0000" stroke-width="3" />
<polyline points="1773.5,867.2 1720.1,880.7" fill="none" stroke="#00ee00" stroke-width="3" />
<polyline points="1773.2,868.5 1772.9,802.2" fill="none" stroke="#0000ff" stroke-width="3" />
</svg></div>
</body></html>
